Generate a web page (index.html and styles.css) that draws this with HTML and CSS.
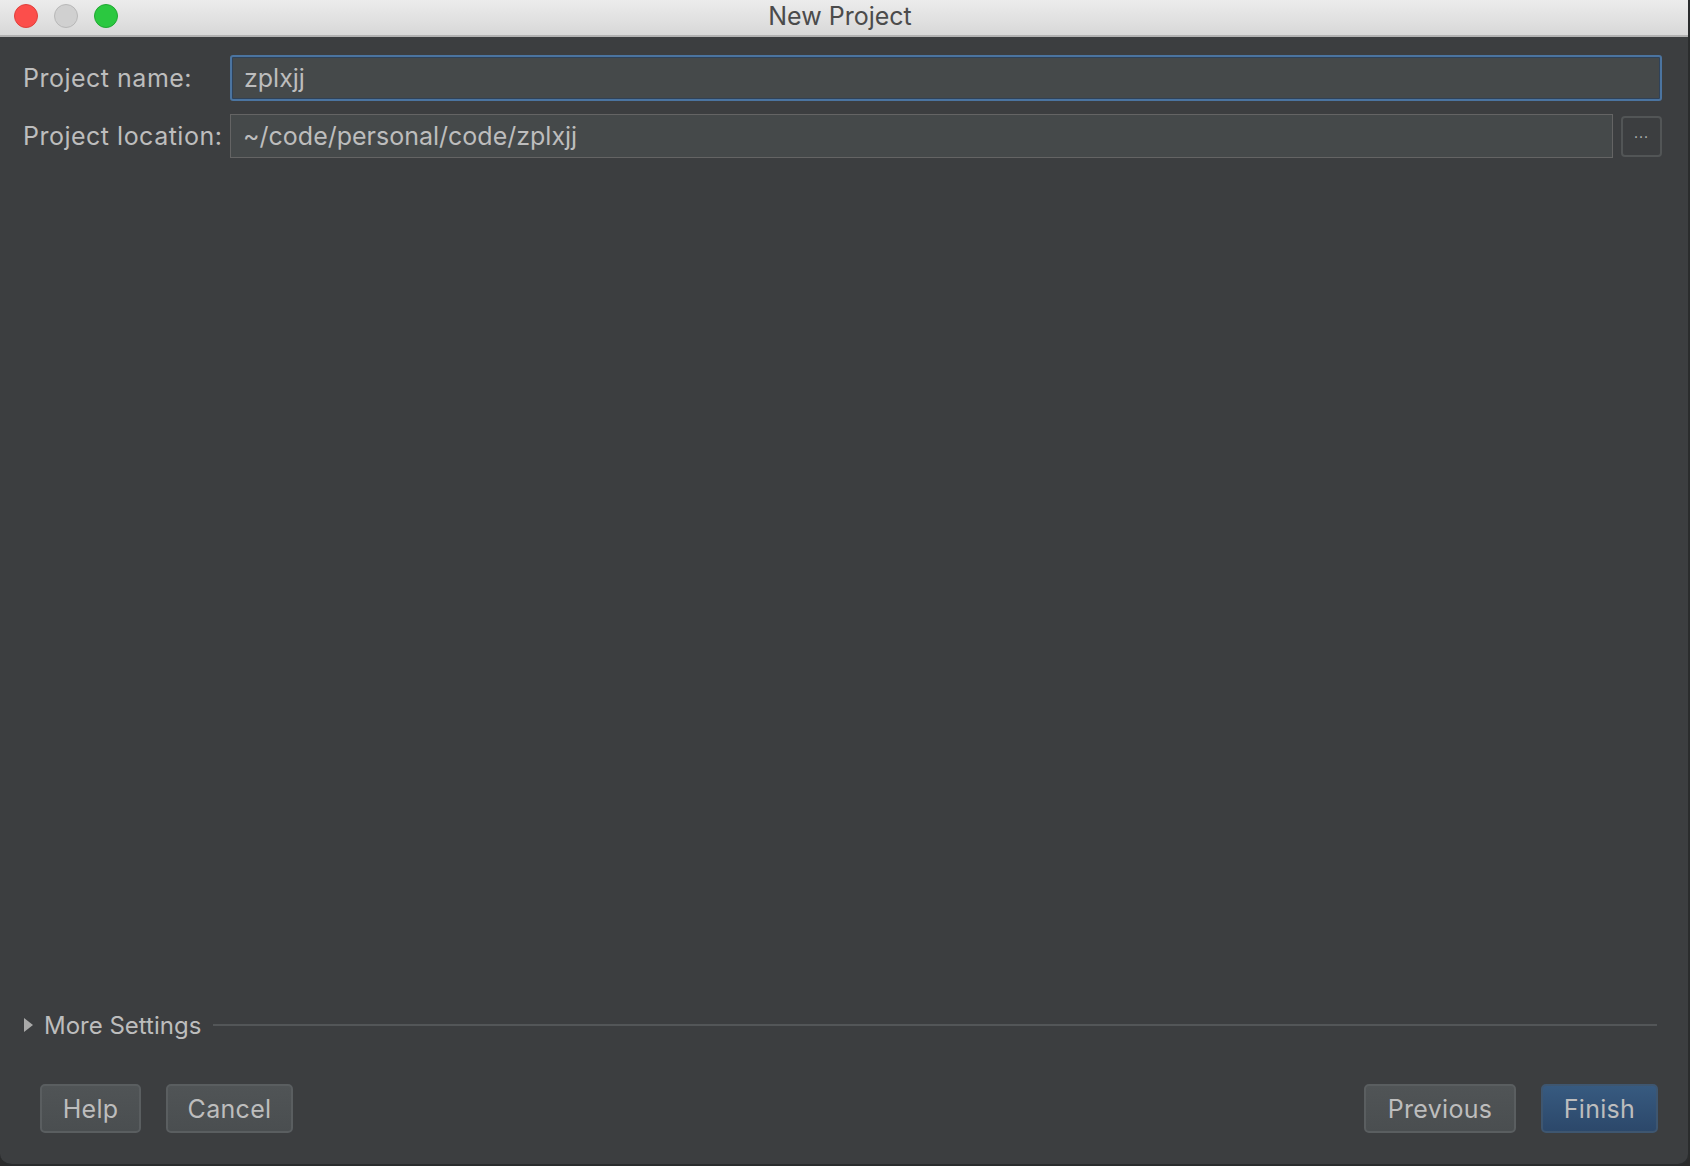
FILE: index.html
```html
<!DOCTYPE html>
<html lang="en">
<head>
<meta charset="utf-8">
<title>New Project</title>
<link rel="stylesheet" href="styles.css">
</head>
<body>
<div class="window">
  <header class="titlebar">
    <div class="lights">
      <span class="light light-close"></span>
      <span class="light light-min"></span>
      <span class="light light-max"></span>
    </div>
    <div class="title">New Project</div>
  </header>
  <main class="content">
    <div class="form">
      <label class="label" for="pname">Project name:</label>
      <div class="field field-focus field-wide"><span id="pname" class="value">zplxjj</span></div>
      <label class="label" for="ploc">Project location:</label>
      <div class="field"><span id="ploc" class="value">~/code/personal/code/zplxjj</span></div>
      <button class="browse" type="button">···</button>
    </div>
    <div class="spacer"></div>
    <div class="more">
      <span class="triangle"></span>
      <span class="more-text">More Settings</span>
      <span class="more-line"></span>
    </div>
    <footer class="footer">
      <div class="group">
        <button class="btn btn-help" type="button">Help</button>
        <button class="btn btn-cancel" type="button">Cancel</button>
      </div>
      <div class="group">
        <button class="btn btn-prev" type="button">Previous</button>
        <button class="btn btn-primary btn-finish" type="button">Finish</button>
      </div>
    </footer>
  </main>
</div>
</body>
</html>
```
FILE: styles.css
```css
* { box-sizing: border-box; }
html, body {
  margin: 0;
  padding: 0;
  width: 1690px;
  height: 1166px;
  overflow: hidden;
  background: #2b2b2b;
}
body {
  font-family: Inter, "Open Sans", "Liberation Sans", sans-serif;
  font-size: 25px;
  color: #bdbdbd;
}
.window {
  width: 1690px;
  height: 1166px;
  display: flex;
  flex-direction: column;
  background: #3c3e40;
  border-right: 2px solid #2a2c2d;
  border-bottom: 2px solid #2a2c2d;
  border-radius: 0 0 12px 12px;
  overflow: hidden;
}
.titlebar {
  height: 37px;
  flex: none;
  position: relative;
  display: flex;
  align-items: center;
  justify-content: center;
  background: linear-gradient(#ececec, #d8d8d8);
  border-bottom: 2px solid #b2b2b2;
}
.lights {
  position: absolute;
  left: 14px;
  top: 4px;
  display: flex;
  gap: 16px;
}
.light {
  width: 24px;
  height: 24px;
  border-radius: 50%;
  display: block;
}
.light-close { background: #fc4e4b; border: 1px solid #e0403c; }
.light-min { background: #d0d0d0; border: 1px solid #b8b8b8; }
.light-max { background: #2bc840; border: 1px solid #20a832; }
.title {
  color: #4b4b4b;
  font-size: 25px;
  line-height: 35px;
  margin-top: -2px;
  margin-right: 8px;
}
.content {
  flex: 1;
  display: flex;
  flex-direction: column;
  padding: 18px 26px 0 23px;
}
.form {
  display: grid;
  grid-template-columns: 199px 1fr 41px;
  column-gap: 8px;
  row-gap: 13px;
  align-items: center;
}
.label {
  color: #bdbdbd;
  white-space: nowrap;
  letter-spacing: 0.5px;
}
.field {
  height: 44px;
  background: #45494a;
  border: 1px solid #646464;
  display: flex;
  align-items: center;
  padding-left: 12px;
}
.field-wide { grid-column: 2 / 4; }
.field-focus {
  height: 46px;
  border: 2px solid #4b74a0;
  border-radius: 3px;
  box-shadow: inset 0 0 0 1px #2f4259;
  padding-left: 12px;
}
.value {
  color: #bdbdbd;
}
.browse {
  width: 41px;
  height: 41px;
  background: #3c3e40;
  border: 2px solid #525556;
  border-radius: 4px;
  color: #bdbdbd;
  font-family: inherit;
  font-size: 14px;
  padding: 0;
  letter-spacing: 1px;
}
.spacer { flex: 1; }
.more {
  display: flex;
  align-items: center;
  height: 30px;
  margin-bottom: 44px;
}
.triangle {
  width: 0;
  height: 0;
  border-top: 7px solid transparent;
  border-bottom: 7px solid transparent;
  border-left: 9px solid #a9a9a9;
  margin-left: 1px;
}
.more-text {
  margin-left: 11px;
  color: #bdbdbd;
  font-size: 24px;
}
.more-line {
  flex: 1;
  height: 2px;
  background: #535658;
  margin-left: 12px;
  margin-right: 5px;
}
.footer {
  display: flex;
  justify-content: space-between;
  padding: 0 4px 31px 17px;
}
.group {
  display: flex;
  gap: 25px;
}
.btn {
  height: 49px;
  background: linear-gradient(#505456, #4a4e50);
  border: 2px solid #5a5e60;
  border-radius: 5px;
  color: #bdbdbd;
  font-family: inherit;
  font-size: 25px;
  padding: 0;
  letter-spacing: 0.3px;
}
.btn-help { width: 101px; }
.btn-cancel { width: 127px; }
.btn-prev { width: 152px; }
.btn-finish { width: 117px; }
.btn-primary {
  background: linear-gradient(#375a80, #2c486a);
  border-color: #3e5670;
}
```
